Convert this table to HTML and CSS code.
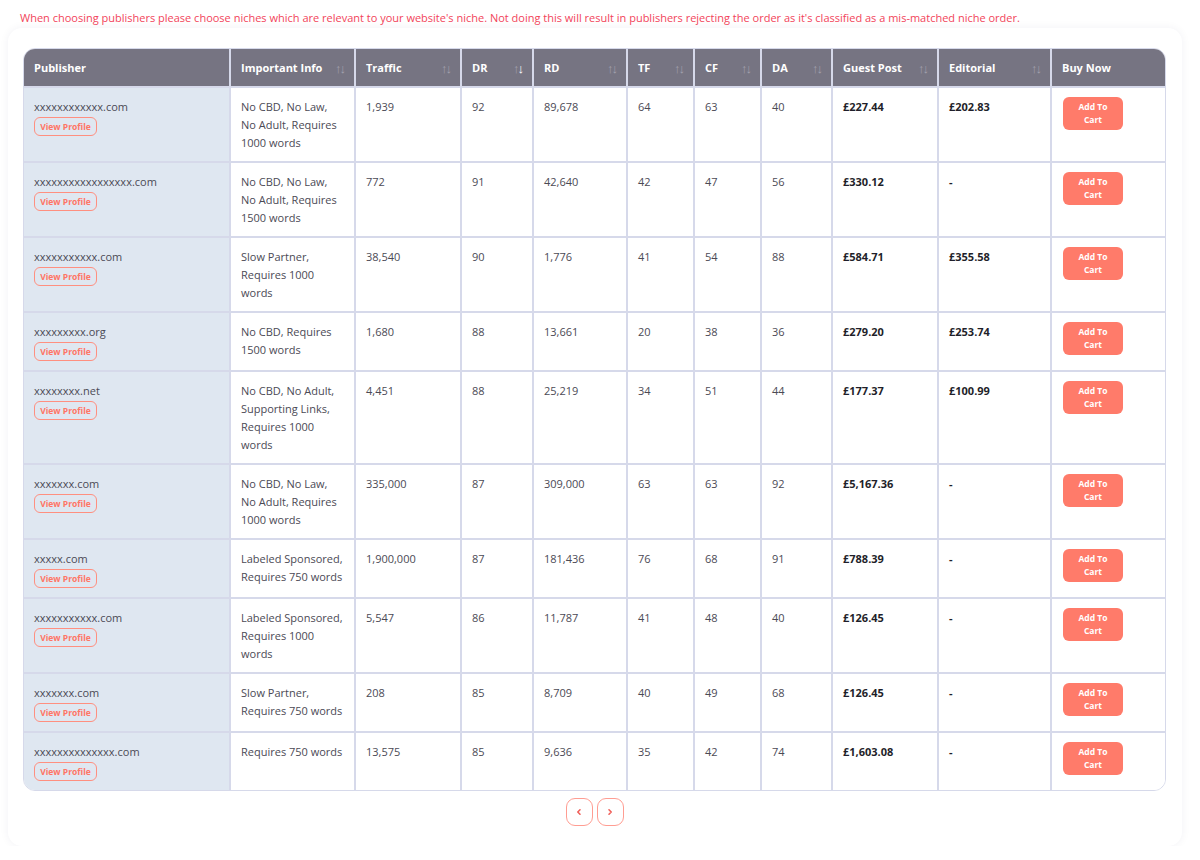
FILE: index.html
```html
<!DOCTYPE html>
<html lang="en">
<head>
<meta charset="utf-8">
<title>Publishers</title>
<link rel="stylesheet" href="styles.css">
</head>
<body>
<p class="warning">When choosing publishers please choose niches which are relevant to your website's niche. Not doing this will result in publishers rejecting the order as it's classified as a mis-matched niche order.</p>
<div class="card">
  <div class="table-wrap">
    <table class="pubs">
      <colgroup>
        <col style="width:206px"><col style="width:125px"><col style="width:106px"><col style="width:72px"><col style="width:94px"><col style="width:67px"><col style="width:67px"><col style="width:71px"><col style="width:106px"><col style="width:113px"><col style="width:115px">
      </colgroup>
      <thead>
        <tr>
          <th>Publisher</th>
          <th><div class="th"><span>Important Info</span><span class="sort">↑↓</span></div></th>
          <th><div class="th"><span>Traffic</span><span class="sort">↑↓</span></div></th>
          <th><div class="th"><span>DR</span><span class="sort">↑<b>↓</b></span></div></th>
          <th><div class="th"><span>RD</span><span class="sort">↑↓</span></div></th>
          <th><div class="th"><span>TF</span><span class="sort">↑↓</span></div></th>
          <th><div class="th"><span>CF</span><span class="sort">↑↓</span></div></th>
          <th><div class="th"><span>DA</span><span class="sort">↑↓</span></div></th>
          <th><div class="th"><span>Guest Post</span><span class="sort">↑↓</span></div></th>
          <th><div class="th"><span>Editorial</span><span class="sort">↑↓</span></div></th>
          <th>Buy Now</th>
        </tr>
      </thead>
      <tbody>
        <tr><td class="pub"><div class="site">xxxxxxxxxxxx.com</div><button class="profile">View Profile</button></td><td>No CBD, No Law, No Adult, Requires 1000 words</td><td>1,939</td><td>92</td><td>89,678</td><td>64</td><td>63</td><td>40</td><td class="price">£227.44</td><td class="price">£202.83</td><td><button class="cart">Add To<br>Cart</button></td></tr>
        <tr><td class="pub"><div class="site">xxxxxxxxxxxxxxxxx.com</div><button class="profile">View Profile</button></td><td>No CBD, No Law, No Adult, Requires 1500 words</td><td>772</td><td>91</td><td>42,640</td><td>42</td><td>47</td><td>56</td><td class="price">£330.12</td><td class="price">-</td><td><button class="cart">Add To<br>Cart</button></td></tr>
        <tr><td class="pub"><div class="site">xxxxxxxxxxx.com</div><button class="profile">View Profile</button></td><td>Slow Partner, Requires 1000 words</td><td>38,540</td><td>90</td><td>1,776</td><td>41</td><td>54</td><td>88</td><td class="price">£584.71</td><td class="price">£355.58</td><td><button class="cart">Add To<br>Cart</button></td></tr>
        <tr><td class="pub"><div class="site">xxxxxxxxx.org</div><button class="profile">View Profile</button></td><td>No CBD, Requires 1500 words</td><td>1,680</td><td>88</td><td>13,661</td><td>20</td><td>38</td><td>36</td><td class="price">£279.20</td><td class="price">£253.74</td><td><button class="cart">Add To<br>Cart</button></td></tr>
        <tr><td class="pub"><div class="site">xxxxxxxx.net</div><button class="profile">View Profile</button></td><td>No CBD, No Adult, Supporting Links, Requires 1000 words</td><td>4,451</td><td>88</td><td>25,219</td><td>34</td><td>51</td><td>44</td><td class="price">£177.37</td><td class="price">£100.99</td><td><button class="cart">Add To<br>Cart</button></td></tr>
        <tr><td class="pub"><div class="site">xxxxxxx.com</div><button class="profile">View Profile</button></td><td>No CBD, No Law, No Adult, Requires 1000 words</td><td>335,000</td><td>87</td><td>309,000</td><td>63</td><td>63</td><td>92</td><td class="price">£5,167.36</td><td class="price">-</td><td><button class="cart">Add To<br>Cart</button></td></tr>
        <tr><td class="pub"><div class="site">xxxxx.com</div><button class="profile">View Profile</button></td><td>Labeled Sponsored, Requires 750 words</td><td>1,900,000</td><td>87</td><td>181,436</td><td>76</td><td>68</td><td>91</td><td class="price">£788.39</td><td class="price">-</td><td><button class="cart">Add To<br>Cart</button></td></tr>
        <tr><td class="pub"><div class="site">xxxxxxxxxxx.com</div><button class="profile">View Profile</button></td><td>Labeled Sponsored, Requires 1000 words</td><td>5,547</td><td>86</td><td>11,787</td><td>41</td><td>48</td><td>40</td><td class="price">£126.45</td><td class="price">-</td><td><button class="cart">Add To<br>Cart</button></td></tr>
        <tr><td class="pub"><div class="site">xxxxxxx.com</div><button class="profile">View Profile</button></td><td>Slow Partner, Requires 750 words</td><td>208</td><td>85</td><td>8,709</td><td>40</td><td>49</td><td>68</td><td class="price">£126.45</td><td class="price">-</td><td><button class="cart">Add To<br>Cart</button></td></tr>
        <tr><td class="pub"><div class="site">xxxxxxxxxxxxxx.com</div><button class="profile">View Profile</button></td><td>Requires 750 words</td><td>13,575</td><td>85</td><td>9,636</td><td>35</td><td>42</td><td>74</td><td class="price">£1,603.08</td><td class="price">-</td><td><button class="cart">Add To<br>Cart</button></td></tr>
      </tbody>
    </table>
  </div>
  <div class="pager">
    <button class="page-btn" aria-label="Previous"><svg width="8" height="8" viewBox="0 0 8 8"><path d="M5 1.8 L2.8 4 L5 6.2" fill="none" stroke="#f0605a" stroke-width="1.6" stroke-linecap="round" stroke-linejoin="round"/></svg></button>
    <button class="page-btn" aria-label="Next"><svg width="8" height="8" viewBox="0 0 8 8"><path d="M3 1.8 L5.2 4 L3 6.2" fill="none" stroke="#f0605a" stroke-width="1.6" stroke-linecap="round" stroke-linejoin="round"/></svg></button>
  </div>
</div>
</body>
</html>
```

FILE: styles.css
```css
* { box-sizing: border-box; }
html, body { margin: 0; padding: 0; background: #ffffff; }
body {
  font-family: "Open Sans", "Noto Sans", sans-serif;
  font-size: 11px;
  color: #4b4a55;
  padding: 0 0 0 8px;
  width: 1200px;
}
.warning {
  margin: 0;
  padding: 11px 0 0 12px;
  height: 28px;
  color: #f2445a;
  font-size: 11px;
  line-height: 14px;
}
.card {
  width: 1174px;
  background: #fff;
  border-radius: 14px;
  box-shadow: 0 0 10px rgba(40, 40, 80, 0.06);
  padding: 20px 16px 20px 15px;
}
.table-wrap {
  border-radius: 12px;
  overflow: hidden;
  border: 1px solid #d6d9ea;
}
.pubs {
  width: 1142px;
  border-collapse: collapse;
  table-layout: fixed;
}
.pubs th {
  background: #767482;
  color: #fff;
  font-weight: 700;
  font-size: 11px;
  text-align: left;
  height: 38px;
  padding: 0 8px 0 10px;
  border: 2px solid #d6d9ea;
  border-top: 0;
}
.pubs th:first-child, .pubs td:first-child { border-left: 0; }
.pubs th:last-child, .pubs td:last-child { border-right: 0; }
.pubs tbody tr:last-child td { border-bottom: 0; }
.th { display: flex; justify-content: space-between; align-items: center; }
.sort { color: #a3a1ad; font-size: 13px; letter-spacing: -2px; font-weight: 400; padding-right: 2px; }
.sort b { color: #ffffff; font-weight: 400; }
.pubs td {
  vertical-align: top;
  padding: 10px 10px 9px;
  line-height: 18px;
  border: 2px solid #d6d9ea;
  background: #fff;
}
.pubs td.pub { background: #dfe7f1; }
.site { color: #4b4a55; line-height: 18px; }
.profile {
  display: block;
  margin-top: 1px;
  font-family: inherit;
  font-size: 8.5px;
  font-weight: 700;
  color: #ff7565;
  background: transparent;
  border: 1px solid #ff8f80;
  border-radius: 6px;
  width: 63px;
  height: 19px;
  padding: 0;
}
.price { font-weight: 700; color: #1f1f2a; }
.cart {
  display: block;
  font-family: inherit;
  background: #ff7b6a;
  color: #fff;
  font-weight: 700;
  font-size: 8.5px;
  line-height: 12.5px;
  border: 0;
  border-radius: 6px;
  width: 60px;
  height: 33px;
  padding: 0;
  margin: -1px 0 0 1px;
}
.pager {
  display: flex;
  justify-content: center;
  gap: 4px;
  padding-top: 7px;
}
.page-btn {
  width: 27px;
  height: 28px;
  border: 1px solid #ff9d92;
  border-radius: 9px;
  background: #fff;
  display: flex;
  align-items: center;
  justify-content: center;
  padding: 0;
}
```
